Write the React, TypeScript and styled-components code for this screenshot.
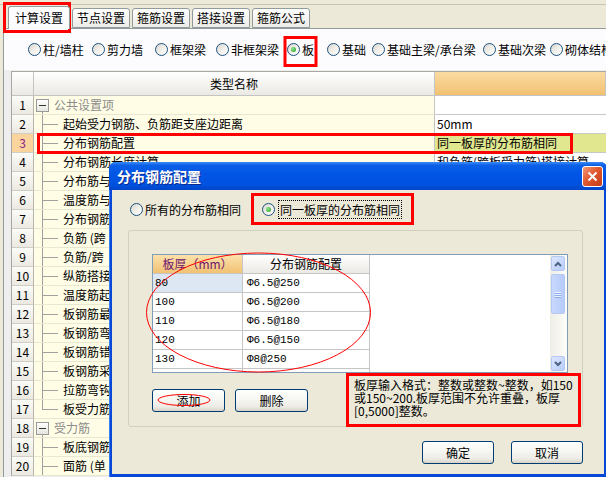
import React from 'react';
import styled, { createGlobalStyle } from 'styled-components';

const GlobalStyle = createGlobalStyle`
  html, body {
    margin: 0;
    padding: 0;
    background: #ece9d8;
    overflow: hidden;
  }
  body {
    font-family: "Noto Sans CJK SC", "Noto Sans", sans-serif;
    font-size: 12px;
    color: #000;
  }
`;

const tabs = ['计算设置', '节点设置', '箍筋设置', '搭接设置', '箍筋公式'];

const kinds = [
  { label: '柱/墙柱', w: 64 },
  { label: '剪力墙', w: 63 },
  { label: '框架梁', w: 61 },
  { label: '非框架梁', w: 71 },
  { label: '板', w: 40, checked: true },
  { label: '基础', w: 45 },
  { label: '基础主梁/承台梁', w: 111 },
  { label: '基础次梁', w: 67 },
  { label: '砌体结构', w: 80 },
];

// names of the rows under the dialog are only what shows left of it
type Kind = 'group' | 'child' | 'last';
const rows: { kind: Kind; name: string; value?: string; active?: boolean }[] = [
  { kind: 'group', name: '公共设置项' },
  { kind: 'child', name: '起始受力钢筋、负筋距支座边距离', value: '50mm' },
  { kind: 'child', name: '分布钢筋配置', value: '同一板厚的分布筋相同', active: true },
  { kind: 'child', name: '分布钢筋长度计算', value: '和负筋(跨板受力筋)搭接计算' },
  { kind: 'child', name: '分布筋与' },
  { kind: 'child', name: '温度筋与' },
  { kind: 'child', name: '分布钢筋' },
  { kind: 'child', name: '负筋 (跨' },
  { kind: 'child', name: '负筋/跨' },
  { kind: 'child', name: '纵筋搭接' },
  { kind: 'child', name: '温度筋起' },
  { kind: 'child', name: '板钢筋最' },
  { kind: 'child', name: '板钢筋弯' },
  { kind: 'child', name: '板钢筋错' },
  { kind: 'child', name: '板钢筋采' },
  { kind: 'child', name: '拉筋弯钩' },
  { kind: 'last', name: '板受力筋' },
  { kind: 'group', name: '受力筋' },
  { kind: 'child', name: '板底钢筋' },
  { kind: 'child', name: '面筋 (单' },
];

const slabs = [
  { t: '80', cfg: 'Φ6.5@250' },
  { t: '100', cfg: 'Φ6.5@200' },
  { t: '110', cfg: 'Φ6.5@180' },
  { t: '120', cfg: 'Φ6.5@150' },
  { t: '130', cfg: 'Φ8@250' },
  { t: '', cfg: '' },
];

const Screen = styled.div`
  position: relative;
  width: 606px;
  height: 477px;
  overflow: hidden;
  display: flex;
  flex-direction: column;
  background: #ece9d8;
`;

const TabStrip = styled.div`
  height: 28px;
  flex: none;
  display: flex;
  align-items: flex-end;
  gap: 2px;
  padding-left: 8px;
  background: linear-gradient(to bottom, #ece9d8 4px, #c9c5b4 4px, #c9c5b4 5px, #ece9d8 5px);
`;

const Tab = styled.div<{ $active?: boolean }>`
  position: relative;
  z-index: ${p => (p.$active ? 2 : 1)};
  height: ${p => (p.$active ? 22 : 18)}px;
  margin-bottom: ${p => (p.$active ? -1 : 0)}px;
  padding: 0 ${p => (p.$active ? 6 : 4)}px;
  line-height: ${p => (p.$active ? 21 : 18)}px;
  border: 1px solid #919b9c;
  border-bottom: ${p => (p.$active ? 'none' : '1px solid #919b9c')};
  border-radius: 3px 3px 0 0;
  background: ${p => (p.$active ? '#fcfcfe' : 'linear-gradient(#ffffff, #ecebe6)')};
  white-space: nowrap;
`;

const Panel = styled.div`
  flex: 1;
  min-height: 0;
  margin-left: 3px;
  border: 1px solid #919b9c;
  border-right: none;
  border-bottom: none;
  background: #fcfcfe;
  display: flex;
  flex-direction: column;
`;

const RadioBar = styled.div`
  height: 41px;
  flex: none;
  display: flex;
  align-items: center;
  padding-left: 24px;
  white-space: nowrap;
  overflow: hidden;
`;

const RadioItem = styled.label<{ $w?: number }>`
  display: flex;
  align-items: center;
  gap: 2px;
  flex: none;
  width: ${p => (p.$w ? `${p.$w}px` : 'auto')};
`;

const Radio = styled.span<{ $checked?: boolean }>`
  position: relative;
  width: 11px;
  height: 11px;
  flex: none;
  border: 1px solid #1c5180;
  border-radius: 50%;
  background: linear-gradient(135deg, #d8d6cc 0%, #f2f1ec 55%, #ffffff 100%);
  &::after {
    content: '';
    display: ${p => (p.$checked ? 'block' : 'none')};
    position: absolute;
    left: 3px;
    top: 3px;
    width: 5px;
    height: 5px;
    border-radius: 50%;
    background: radial-gradient(circle at 35% 35%, #8fe38f, #21a121);
  }
`;

const GridArea = styled.div`
  flex: 1;
  min-height: 0;
  overflow: hidden;
  background: #eeeeee;
  padding: 1px 0 0 7px;
`;

const Grid = styled.div`
  border-top: 1px solid #a8a8a0;
  border-left: 1px solid #a8a8a0;
  background: #fff;
`;

const Row = styled.div<{ $head?: boolean }>`
  display: grid;
  grid-template-columns: 22px 401px 1fr;
  height: ${p => (p.$head ? 24 : 19)}px;
`;

const NumCell = styled.div<{ $active?: boolean }>`
  border-right: 1px solid #b8b6ac;
  border-bottom: 1px solid #cfcdc4;
  background: ${p => (p.$active ? '#f9d49c' : 'linear-gradient(#fbfbf8, #ebe9e1)')};
  color: ${p => (p.$active ? '#8a1c8a' : '#000')};
  text-align: center;
  line-height: 18px;
`;

const HeadCell = styled.div<{ $accent?: boolean }>`
  border-right: 1px solid #c4c4c4;
  border-bottom: 1px solid #c4c4c4;
  background: ${p => (p.$accent ? 'linear-gradient(#fbdba2, #f1c172)' : 'linear-gradient(#ffffff, #ebe9e3)')};
  text-align: center;
  line-height: 23px;
`;

const NameCell = styled.div<{ $kind: Kind }>`
  position: relative;
  border-right: 1px solid #c4c4c4;
  border-bottom: 1px solid #e8e7d2;
  background: #fffde6;
  line-height: 18px;
  padding-left: ${p => (p.$kind === 'group' ? 20 : 29)}px;
  color: ${p => (p.$kind === 'group' ? '#8c8c8c' : '#000')};
  white-space: nowrap;
  overflow: hidden;
  &::before {
    content: '';
    position: absolute;
    left: 8px;
    width: 0;
    border-left: 1px solid #a0a0a0;
    top: ${p => (p.$kind === 'group' ? 14 : 0)}px;
    height: ${p => (p.$kind === 'last' ? 10 : p.$kind === 'group' ? 5 : 19)}px;
  }
  &::after {
    content: '';
    display: ${p => (p.$kind === 'group' ? 'none' : 'block')};
    position: absolute;
    left: 8px;
    top: 9px;
    width: 16px;
    border-top: 1px solid #a0a0a0;
  }
`;

const Toggle = styled.span`
  position: absolute;
  left: 2px;
  top: 3px;
  width: 11px;
  height: 11px;
  border: 1px solid #9a9a9a;
  background: linear-gradient(#ffffff, #e6e6e0);
  &::after {
    content: '';
    position: absolute;
    left: 2px;
    right: 2px;
    top: 5px;
    border-top: 1px solid #333;
  }
`;

const ValueCell = styled.div<{ $active?: boolean }>`
  border-bottom: 1px solid #c8c8c8;
  background: ${p => (p.$active ? '#e0e78f' : '#fff')};
  padding-left: 2px;
  line-height: 18px;
  white-space: nowrap;
  overflow: hidden;
`;

/* ---------- dialog ---------- */

const Dialog = styled.div`
  position: absolute;
  left: 109px;
  top: 162px;
  width: 498px;
  height: 315px;
  display: flex;
  flex-direction: column;
  background: #0848d8;
  border-radius: 7px 7px 0 0;
  box-shadow: inset 1px 0 0 #3c7ff0, inset -1px 0 0 #002b9c;
`;

const TitleBar = styled.div`
  height: 28px;
  flex: none;
  display: flex;
  align-items: center;
  justify-content: space-between;
  padding: 0 4px 0 8px;
  border-radius: 7px 7px 0 0;
  background: linear-gradient(#3b8cf8 0%, #0b5fe6 12%, #0055e5 45%, #0052e0 80%, #0045c8 100%);
`;

const Title = styled.div`
  color: #fff;
  font-weight: bold;
  font-size: 14px;
  text-shadow: 1px 1px 0 #0a2a8c;
`;

const CloseBtn = styled.div`
  width: 21px;
  height: 21px;
  box-sizing: border-box;
  border: 1px solid #fff;
  border-radius: 3px;
  background: linear-gradient(135deg, #f19b7c 0%, #e2582f 45%, #c23c16 100%);
  display: flex;
  align-items: center;
  justify-content: center;
`;

const Client = styled.div`
  flex: 1;
  margin: 0 3px 3px;
  background: #ece9d8;
  display: flex;
  flex-direction: column;
`;

const DlgRadioRow = styled.div`
  height: 38px;
  flex: none;
  display: flex;
  align-items: center;
  padding-left: 18px;
  white-space: nowrap;
`;

const Focus = styled.span`
  outline: 1px dotted #000;
  outline-offset: 0;
  padding: 0 1px;
  margin-left: 2px;
`;

const Group = styled.div`
  height: 197px;
  box-sizing: border-box;
  margin: 2px 21px 0 16px;
  border: 1px solid #d0d0bf;
  border-radius: 3px;
  padding: 23px 14px 0 23px;
`;

const List = styled.div`
  height: 119px;
  box-sizing: border-box;
  border: 1px solid #7f9db9;
  background: #fff;
  display: flex;
`;

const ListBody = styled.div`
  flex: 1;
  overflow: hidden;
`;

const ListRow = styled.div`
  display: grid;
  grid-template-columns: 90px 127px;
  height: 19px;
`;

const ListHead = styled.div<{ $accent?: boolean }>`
  border-right: 1px solid #c5c5c5;
  border-bottom: 1px solid #c5c5c5;
  background: ${p => (p.$accent ? 'linear-gradient(#fbe1aa, #f1c273)' : 'linear-gradient(#ffffff, #ebe9e3)')};
  color: ${p => (p.$accent ? '#6e1470' : '#000')};
  text-align: center;
  line-height: 18px;
  white-space: nowrap;
`;

const ListCell = styled.div<{ $sel?: boolean; $pad: number }>`
  border-right: 1px solid #c5c5c5;
  border-bottom: 1px solid #c5c5c5;
  background: ${p => (p.$sel ? '#dde7f3' : '#fff')};
  padding-left: ${p => p.$pad}px;
  font-family: "Liberation Mono", "Noto Sans CJK SC", monospace;
  font-size: 11px;
  line-height: 18px;
`;

const ScrollBar = styled.div`
  width: 16px;
  flex: none;
  padding: 1px 0 1px 1px;
  display: flex;
  flex-direction: column;
  gap: 3px;
  background: linear-gradient(to right, #eeede5, #fdfdfa);
`;

const ScrollBtn = styled.div`
  height: 15px;
  width: 14px;
  box-sizing: border-box;
  border: 1px solid #b5c8f3;
  border-radius: 2px;
  background: linear-gradient(135deg, #dce6fe, #b9cdfa);
  display: flex;
  align-items: center;
  justify-content: center;
`;

const Thumb = styled.div`
  height: 40px;
  width: 14px;
  box-sizing: border-box;
  border: 1px solid #b5c8f3;
  border-radius: 2px;
  background: linear-gradient(to right, #c9d8fc, #b6cbf9);
  display: flex;
  flex-direction: column;
  align-items: center;
  justify-content: center;
  gap: 1px;
`;

const Grip = styled.span`
  width: 6px;
  height: 1px;
  background: #eef3ff;
  box-shadow: 0 1px 0 #8daaf0;
`;

const ScrollGap = styled.div`
  flex: 1;
`;

const BottomRow = styled.div`
  display: flex;
  align-items: flex-start;
`;

const ButtonPair = styled.div`
  display: flex;
  gap: 10px;
  margin-top: 16px;
`;

const XpButton = styled.button<{ $w?: number }>`
  width: ${p => p.$w ?? 73}px;
  height: 23px;
  padding: 0;
  border: 1px solid #003c74;
  border-radius: 3px;
  background: linear-gradient(#ffffff 0%, #f6f6f2 45%, #ecebe5 80%, #d8d3c8 100%);
  font-family: inherit;
  font-size: 12px;
  color: #000;
`;

const Hint = styled.div`
  margin-left: auto;
  width: 214px;
  padding-top: 5px;
  line-height: 13px;
  white-space: nowrap;
`;

const Footer = styled.div`
  display: flex;
  justify-content: flex-end;
  gap: 17px;
  padding: 14px 21px 0 0;
`;

const Marks = styled.svg`
  position: absolute;
  left: 0;
  top: 0;
  pointer-events: none;
`;

const Chevron = ({ up }: { up?: boolean }) => (
  <svg width="8" height="6" viewBox="0 0 8 6">
    <path d={up ? 'M1 5 L4 2 L7 5' : 'M1 1 L4 4 L7 1'} fill="none" stroke="#4d6185" strokeWidth="2" />
  </svg>
);

export default function App() {
  return (
    <>
      <GlobalStyle />
      <Screen>
        <TabStrip>
          {tabs.map((t, i) => (
            <Tab key={t} $active={i === 0}>{t}</Tab>
          ))}
        </TabStrip>
        <Panel>
          <RadioBar>
            {kinds.map(k => (
              <RadioItem key={k.label} $w={k.w}>
                <Radio $checked={k.checked} />
                <span>{k.label}</span>
              </RadioItem>
            ))}
          </RadioBar>
          <GridArea>
            <Grid>
              <Row $head>
                <HeadCell />
                <HeadCell>类型名称</HeadCell>
                <HeadCell $accent />
              </Row>
              {rows.map((r, i) => (
                <Row key={i}>
                  <NumCell $active={r.active}>{i + 1}</NumCell>
                  <NameCell $kind={r.kind}>
                    {r.kind === 'group' && <Toggle />}
                    {r.name}
                  </NameCell>
                  <ValueCell $active={r.active}>{r.value}</ValueCell>
                </Row>
              ))}
            </Grid>
          </GridArea>
        </Panel>

        <Dialog>
          <TitleBar>
            <Title>分布钢筋配置</Title>
            <CloseBtn>
              <svg width="11" height="11" viewBox="0 0 11 11">
                <path d="M1.5 1.5 L9.5 9.5 M9.5 1.5 L1.5 9.5" stroke="#fff" strokeWidth="2" />
              </svg>
            </CloseBtn>
          </TitleBar>
          <Client>
            <DlgRadioRow>
              <RadioItem $w={132}>
                <Radio />
                <span>所有的分布筋相同</span>
              </RadioItem>
              <RadioItem>
                <Radio $checked />
                <Focus>同一板厚的分布筋相同</Focus>
              </RadioItem>
            </DlgRadioRow>
            <Group>
              <List>
                <ListBody>
                  <ListRow>
                    <ListHead $accent>板厚（mm）</ListHead>
                    <ListHead>分布钢筋配置</ListHead>
                  </ListRow>
                  {slabs.map((s, i) => (
                    <ListRow key={i}>
                      <ListCell $sel={i === 0} $pad={2}>{s.t}</ListCell>
                      <ListCell $pad={4}>{s.cfg}</ListCell>
                    </ListRow>
                  ))}
                </ListBody>
                <ScrollBar>
                  <ScrollBtn><Chevron up /></ScrollBtn>
                  <Thumb><Grip /><Grip /><Grip /></Thumb>
                  <ScrollGap />
                  <ScrollBtn><Chevron /></ScrollBtn>
                </ScrollBar>
              </List>
              <BottomRow>
                <ButtonPair>
                  <XpButton>添加</XpButton>
                  <XpButton>删除</XpButton>
                </ButtonPair>
                <Hint>
                  板厚输入格式：整数或整数~整数，如150
                  <br />
                  或150~200.板厚范围不允许重叠，板厚
                  <br />
                  [0,5000]整数。
                </Hint>
              </BottomRow>
            </Group>
            <Footer>
              <XpButton $w={72}>确定</XpButton>
              <XpButton $w={72}>取消</XpButton>
            </Footer>
          </Client>
        </Dialog>

        <Marks width="606" height="477" viewBox="0 0 606 477">
          <g fill="none" stroke="#ff0000">
            <rect x="4.5" y="3.5" width="65" height="28" strokeWidth="3" />
            <rect x="285" y="37.5" width="31" height="28" strokeWidth="3" />
            <rect x="38.5" y="134.5" width="533" height="18" strokeWidth="3" />
            <rect x="252.5" y="194.5" width="160" height="29" strokeWidth="3" />
            <rect x="347.5" y="374.5" width="232" height="51" strokeWidth="3" />
            <ellipse cx="258.5" cy="312.5" rx="112" ry="59.5" strokeWidth="1" />
            <ellipse cx="184" cy="400" rx="26" ry="5.5" strokeWidth="1" />
          </g>
        </Marks>
      </Screen>
    </>
  );
}
